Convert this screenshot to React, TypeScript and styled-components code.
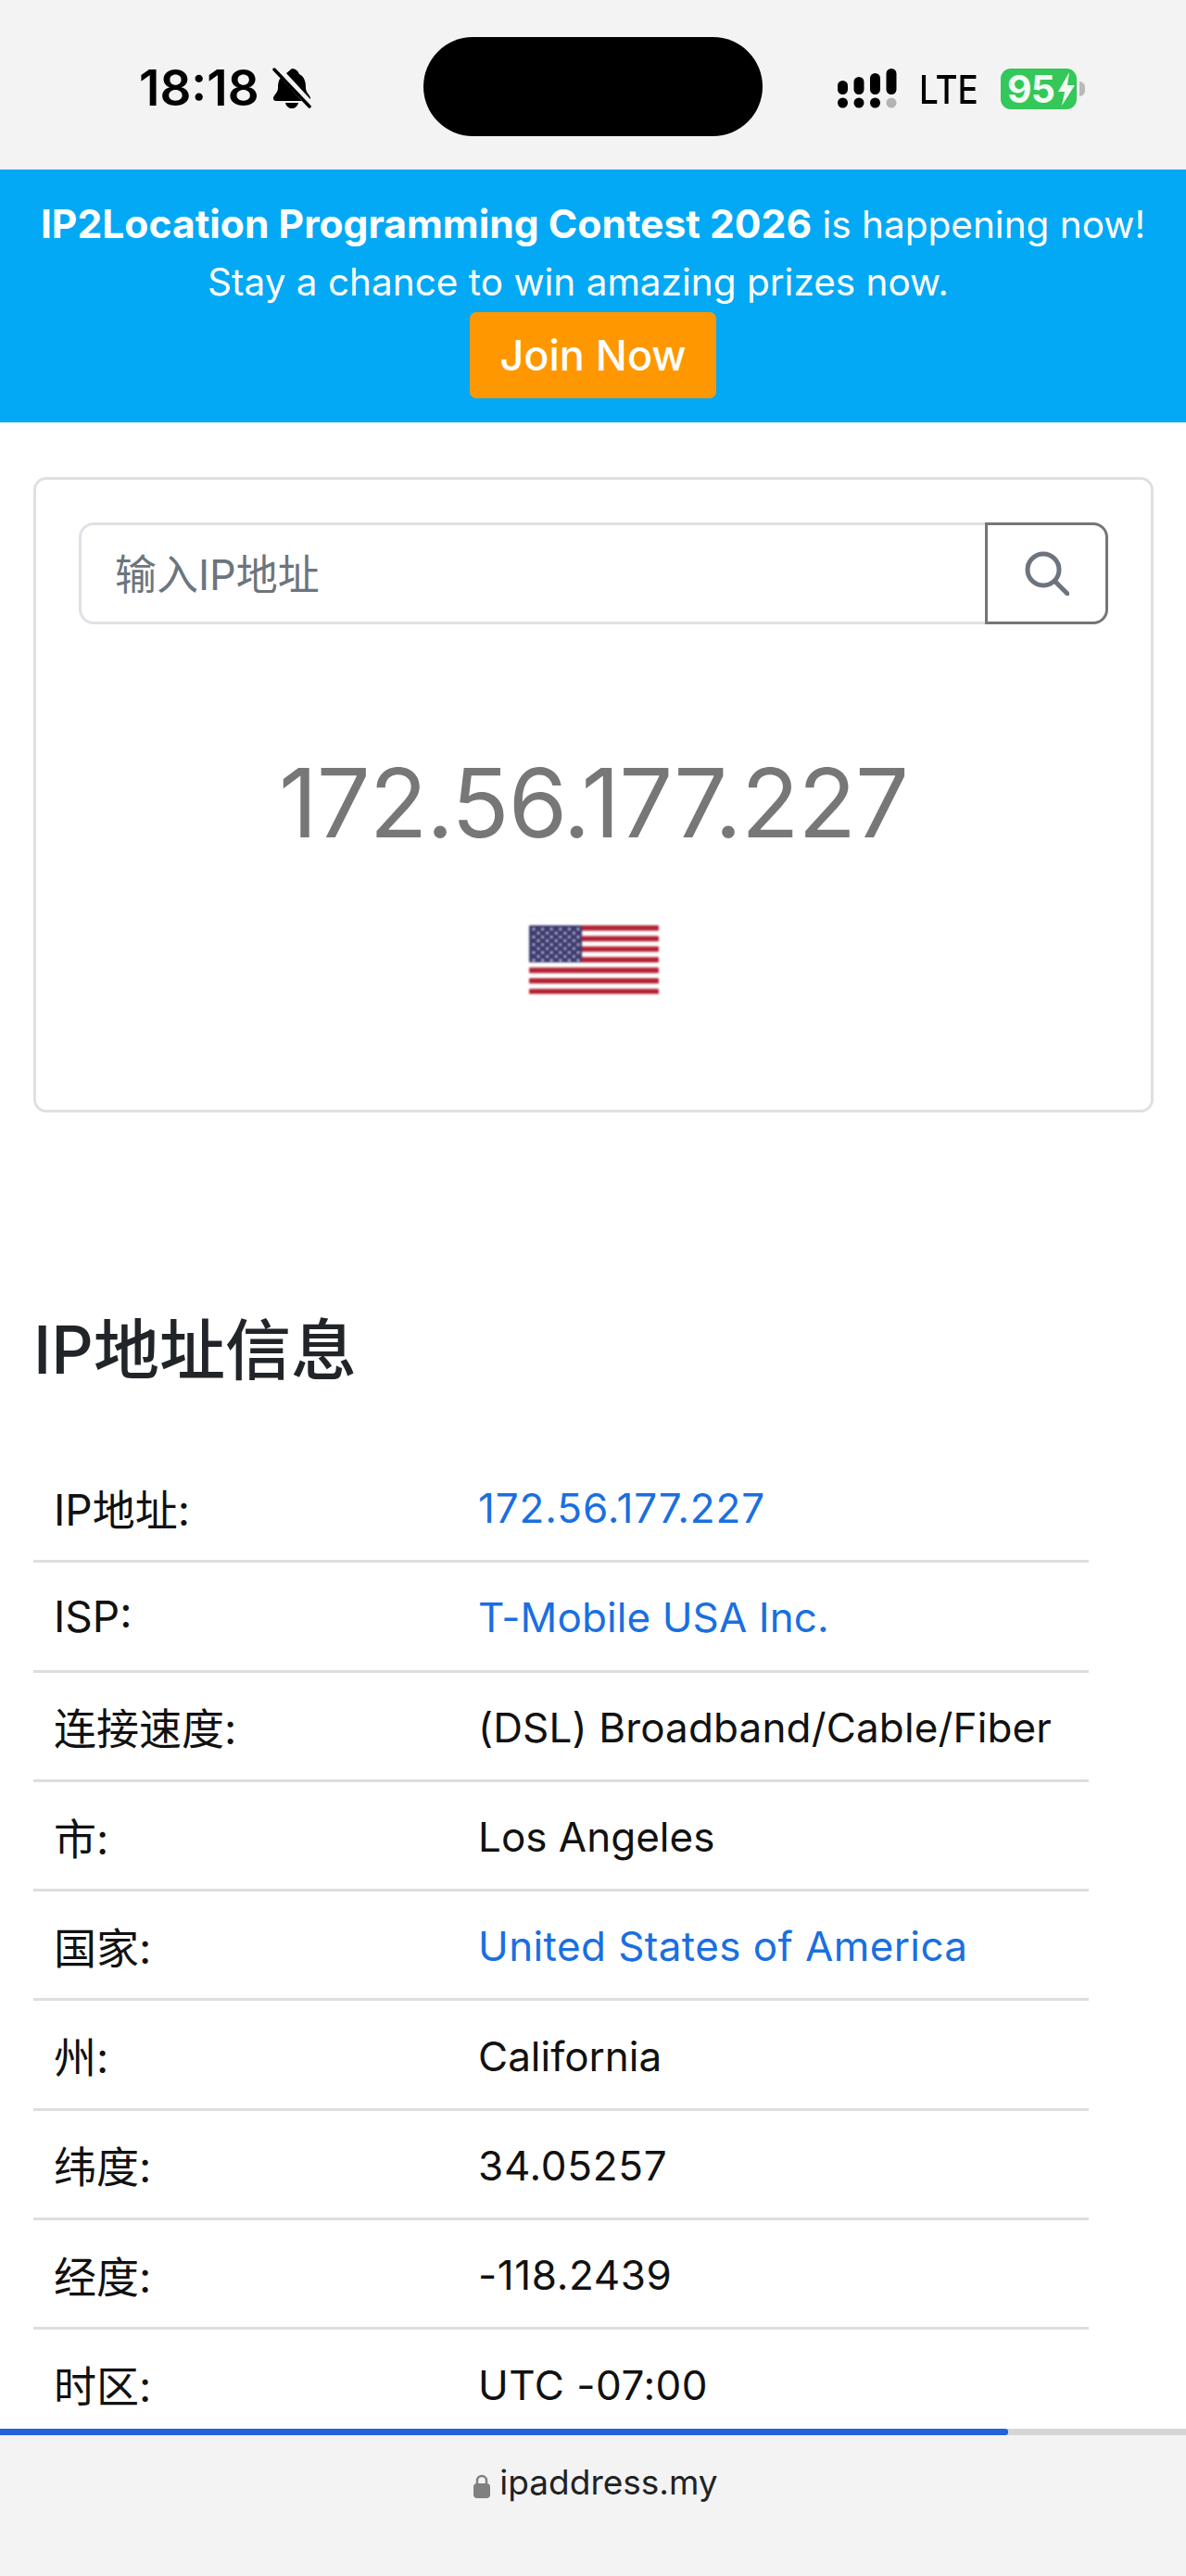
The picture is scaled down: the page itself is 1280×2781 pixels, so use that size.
import * as React from 'react';
import styled, { createGlobalStyle } from 'styled-components';

const GlobalStyle = createGlobalStyle`
  html, body {
    margin: 0;
    padding: 0;
    background: #fff;
  }
  * {
    box-sizing: border-box;
  }
`;

const FONT = `Inter, "Noto Sans CJK SC", sans-serif`;

const Screen = styled.div`
  width: 1280px;
  height: 2781px;
  display: flex;
  flex-direction: column;
  overflow: hidden;
  font-family: ${FONT};
  color: #000;
`;

const StatusBar = styled.div`
  height: 183px;
  flex: none;
  background: #f4f3f3;
  display: grid;
  grid-template-columns: 457px 366px 1fr;
  align-items: center;
`;
const StatusLeft = styled.div`
  display: flex;
  align-items: center;
  gap: 14px;
  padding: 6px 0 0 150px;
  font-size: 53px;
  font-weight: 600;
`;
const Island = styled.div`
  height: 107px;
  margin-top: 4px;
  background: #000;
  border-radius: 54px;
`;
const StatusRight = styled.div`
  display: flex;
  align-items: center;
  padding: 8px 0 0 81px;
`;
const Lte = styled.span`
  font-size: 42px;
  font-weight: 500;
  margin: 2px 24px 0 24px;
  transform: scaleX(0.88);
  transform-origin: left center;
  width: 64px;
`;
const Battery = styled.div`
  position: relative;
  width: 82px;
  height: 44px;
  padding-left: 7px;
  background: #34c759;
  border-radius: 11px;
  color: #f1fbf3;
  font-size: 41px;
  line-height: 44px;
  font-weight: 700;
  letter-spacing: -1px;
`;
const BatteryBolt = styled.svg`
  position: absolute;
  right: 1px;
  top: 4px;
`;
const BatteryNub = styled.div`
  width: 6px;
  height: 16px;
  margin-left: 3px;
  background: #b9b9b9;
  border-radius: 0 6px 6px 0;
`;

const Banner = styled.div`
  height: 273px;
  flex: none;
  background: #03a9f4;
  color: #fff;
  text-align: center;
  padding-top: 27px;
  font-size: 40.5px;
  line-height: 63px;
  white-space: nowrap;

  b {
    font-size: 42.6px;
  }
`;
const BannerLine = styled.div<{ $trailing?: number }>`
  height: 63px;
  padding-right: ${props => props.$trailing || 0}px;
`;
const JoinButton = styled.a`
  display: block;
  width: 266px;
  height: 93px;
  margin: 1px auto 0;
  background: #ff9800;
  border-radius: 7px;
  color: #fff;
  font-size: 45px;
  font-weight: 500;
  line-height: 93px;
`;

const Main = styled.main`
  flex: 1;
  min-height: 0;
  overflow: hidden;
  padding: 59px 35px 0 36px;
  background: #fff;
`;
const Card = styled.section`
  height: 686px;
  border: 3px solid #dee0e2;
  border-radius: 14px;
  padding: 46px 46px 0 46px;
  display: flex;
  flex-direction: column;
  align-items: center;
`;
const SearchGroup = styled.div`
  width: 100%;
  height: 110px;
  display: flex;
`;
const SearchInput = styled.div`
  flex: 1;
  border: 3px solid #dee2e6;
  border-right: 0;
  border-radius: 16px 0 0 16px;
  padding-left: 36px;
  font-size: 45px;
  line-height: 108px;
  color: #6c757d;
`;
const SearchButton = styled.button`
  width: 133px;
  padding: 0;
  background: #fff;
  border: 3px solid #757575;
  border-radius: 0 16px 16px 0;
  display: flex;
  align-items: center;
  justify-content: center;
`;
const IpAddress = styled.div`
  margin-top: 135px;
  font-size: 102.5px;
  line-height: 116px;
  font-weight: 400;
  color: #777;
  letter-spacing: -1px;
`;
const FlagWrap = styled.div`
  margin-top: 74px;
  filter: blur(0.9px);
`;

const Heading = styled.h2`
  margin: 213px 0 0;
  font-size: 71px;
  line-height: 86px;
  font-weight: 500;
  color: #212529;
`;

const InfoTable = styled.div`
  width: 1139px;
  margin-top: 69px;
`;
const Row = styled.div`
  height: 118.3px;
  display: grid;
  grid-template-columns: 458px 1fr;
  align-items: center;
  padding: 0 0 0 22px;
  border-bottom: 3px solid #dedede;
`;
const Label = styled.div`
  font-size: 46px;
  color: #111;
`;
const Value = styled.div<{ $link?: boolean; $track?: number }>`
  padding-top: 3px;
  font-size: 44px;
  letter-spacing: ${props => props.$track || 0}px;
  color: ${props => (props.$link ? '#1a6fe0' : '#111')};
  white-space: nowrap;
`;

const ProgressTrack = styled.div`
  height: 7px;
  flex: none;
  background: #d6d6d6;
`;
const ProgressFill = styled.div`
  height: 100%;
  background: #2463d8;
  border-radius: 0 3px 3px 0;
`;
const AddressBar = styled.footer`
  height: 152px;
  flex: none;
  background: #f3f3f4;
  display: flex;
  justify-content: center;
  gap: 10px;
  padding: 28px 0 0 6px;
  font-size: 37px;
  line-height: 46px;
  color: #222;
`;
const LockIcon = styled.svg`
  margin-top: 14px;
`;

const rows = [
  { label: 'IP地址:', value: '172.56.177.227', link: true, track: 0.9 },
  { label: 'ISP:', value: 'T-Mobile USA Inc.', link: true, track: 0.1 },
  { label: '连接速度:', value: '(DSL) Broadband/Cable/Fiber', track: 0.15 },
  { label: '市:', value: 'Los Angeles' },
  { label: '国家:', value: 'United States of America', link: true, track: 0.4 },
  { label: '州:', value: 'California' },
  { label: '纬度:', value: '34.05257', track: 0.7 },
  { label: '经度:', value: '-118.2439', track: 0.6 },
  { label: '时区:', value: 'UTC -07:00', track: 0.5 },
];

const MutedBell = () => (
  <svg width="42" height="44" viewBox="0 0 42 44">
    <path d="M21 1c4 0 7 3 8 6 6 3 7 9 7 15 0 5 5 8 5 11 0 2-1 3-3 3H4c-2 0-3-1-3-3 0-3 5-6 5-11 0-3 0-6 2-10z" fill="#000" />
    <path d="M14 38h14c-1 4-4 6-7 6s-6-2-7-6z" fill="#000" />
    <path d="M3 -1L41 40" stroke="#f4f3f3" strokeWidth="8" />
    <path d="M2 2L40 42" stroke="#000" strokeWidth="3.5" strokeLinecap="round" />
  </svg>
);

const SignalDots = () => (
  <svg width="64" height="44" viewBox="0 0 64 44">
    <circle cx="5.5" cy="37" r="5.5" fill="#000" />
    <circle cx="23" cy="37" r="5.5" fill="#000" />
    <circle cx="40.5" cy="37" r="5.5" fill="#000" />
    <circle cx="58" cy="37" r="5.5" fill="#b4b4b4" />
    <rect x="0" y="13" width="11" height="15" rx="5.5" fill="#000" />
    <rect x="17.5" y="9" width="11" height="19" rx="5.5" fill="#000" />
    <rect x="35" y="5" width="11" height="23" rx="5.5" fill="#000" />
    <rect x="52.5" y="0" width="11" height="28" rx="5.5" fill="#000" />
  </svg>
);

const UsFlag = () => {
  const stripes = Array.from({ length: 7 }, (_, i) => i * 11.4);
  const stars: { x: number; y: number }[] = [];
  for (let r = 0; r < 9; r++) {
    const count = r % 2 === 0 ? 6 : 5;
    for (let c = 0; c < count; c++) {
      stars.push({ x: (r % 2 === 0 ? 5 : 10) + c * 9.6, y: 4 + r * 4.2 });
    }
  }
  return (
    <svg width="140" height="74" viewBox="0 0 140 74" style={{ display: 'block' }}>
      <rect width="140" height="74" rx="3" fill="#fff" />
      {stripes.map(y => (
        <rect key={y} x="0" y={y} width="140" height="5.8" rx="1" fill="#b22234" />
      ))}
      <rect width="57" height="40" rx="2" fill="#3c3b6e" />
      {stars.map(s => (
        <circle key={`${s.x}-${s.y}`} cx={s.x} cy={s.y} r="1.5" fill="#c9cce0" />
      ))}
    </svg>
  );
};

export default function App() {
  return (
    <Screen>
      <GlobalStyle />
      <StatusBar>
        <StatusLeft>
          18:18
          <MutedBell />
        </StatusLeft>
        <Island />
        <StatusRight>
          <SignalDots />
          <Lte>LTE</Lte>
          <Battery>
            95
            <BatteryBolt width="20" height="36" viewBox="0 0 20 36">
              <path d="M13 0L1 21h7L5 36 19 14h-8z" fill="#f1fbf3" />
            </BatteryBolt>
          </Battery>
          <BatteryNub />
        </StatusRight>
      </StatusBar>

      <Banner>
        <BannerLine>
          <b>IP2Location Programming Contest 2026</b> is happening now!
        </BannerLine>
        <BannerLine $trailing={32}>Stay a chance to win amazing prizes now.</BannerLine>
        <JoinButton>Join Now</JoinButton>
      </Banner>

      <Main>
        <Card>
          <SearchGroup>
            <SearchInput>输入IP地址</SearchInput>
            <SearchButton>
              <svg width="48" height="48" viewBox="0 0 48 48" fill="none" stroke="#6c757d" strokeWidth="5" strokeLinecap="round">
                <circle cx="20" cy="20" r="17" />
                <path d="M33 33l13 13" />
              </svg>
            </SearchButton>
          </SearchGroup>
          <IpAddress>172.56.177.227</IpAddress>
          <FlagWrap>
            <UsFlag />
          </FlagWrap>
        </Card>

        <Heading>IP地址信息</Heading>

        <InfoTable>
          {rows.map(row => (
            <Row key={row.label}>
              <Label>{row.label}</Label>
              <Value $link={row.link} $track={row.track}>{row.value}</Value>
            </Row>
          ))}
        </InfoTable>
      </Main>

      <ProgressTrack>
        <ProgressFill style={{ width: `${(1088 / 1280) * 100}%` }} />
      </ProgressTrack>
      <AddressBar>
        <LockIcon width="18" height="26" viewBox="0 0 18 26">
          <path d="M4 11V7a5 5 0 0 1 10 0v4" fill="none" stroke="#808080" strokeWidth="2.5" />
          <rect x="0" y="10" width="18" height="16" rx="4" fill="#808080" />
        </LockIcon>
        ipaddress.my
      </AddressBar>
    </Screen>
  );
}
